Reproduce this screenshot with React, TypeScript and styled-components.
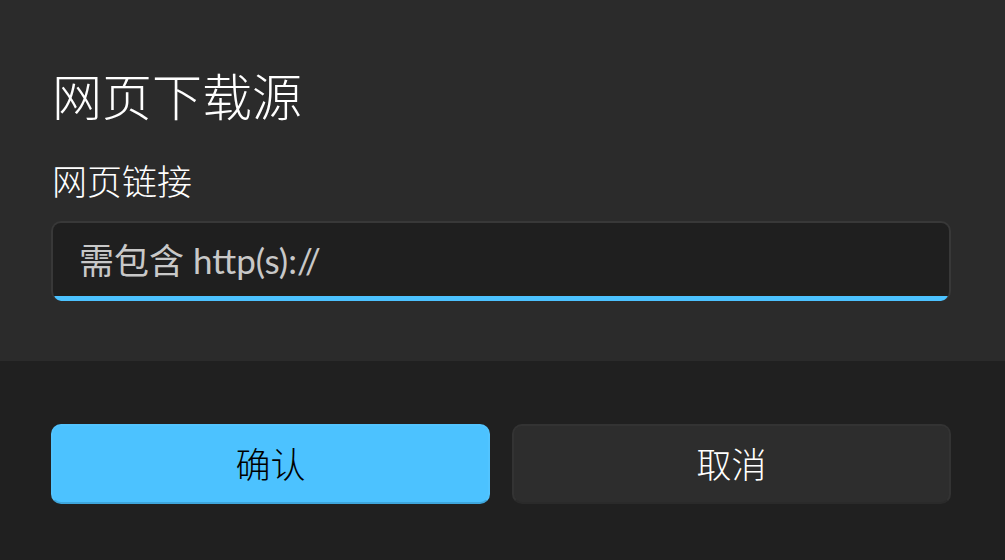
import styled, { createGlobalStyle } from "styled-components";

const GlobalStyle = createGlobalStyle`
  html, body {
    margin: 0;
    padding: 0;
    background: #202020;
  }
  body {
    font-family: "Segoe UI", "Noto Sans", "Noto Sans CJK SC", sans-serif;
    color: #ffffff;
  }
`;

const Dialog = styled.div`
  width: 1005px;
  height: 560px;
  display: flex;
  flex-direction: column;
  overflow: hidden;
`;

const Content = styled.div`
  background: #2b2b2b;
  padding: 59px 54px 60px 51px;
  display: flex;
  flex-direction: column;
  height: 361px;
  box-sizing: border-box;
`;

const Title = styled.h1`
  margin: 0 0 26px 1px;
  font-size: 50px;
  line-height: 70px;
  font-weight: 300;
  font-family: "Noto Sans CJK SC", sans-serif;
`;

const Label = styled.label`
  margin: 0 0 16px 1px;
  font-size: 35px;
  line-height: 50px;
  font-weight: 300;
  font-family: "Noto Sans CJK SC", sans-serif;
`;

const InputBox = styled.div`
  height: 80px;
  box-sizing: border-box;
  border: 2px solid #383838;
  border-bottom: none;
  border-radius: 10px;
  background: #1f1f1f;
  display: flex;
  align-items: center;
  padding: 0 26px 0 26px;
  position: relative;
  overflow: hidden;

  &::after {
    content: "";
    position: absolute;
    left: 0;
    right: 0;
    bottom: 0;
    height: 5px;
    background: #4cc2ff;
  }
`;

const Input = styled.input`
  flex: 1;
  border: none;
  outline: none;
  background: transparent;
  font-size: 35px;
  color: #ffffff;
  font-family: "Lato", "Noto Sans CJK SC", sans-serif;
  padding: 0;
  margin-top: -4px;

  &::placeholder {
    color: #c8c8c8;
  }
`;

const Footer = styled.div`
  flex: 1;
  background: #202020;
  display: grid;
  grid-template-columns: 1fr 1fr;
  gap: 22px;
  padding: 63px 54px 0 51px;
  align-items: start;
`;

const Button = styled.button<{ $primary?: boolean }>`
  height: 80px;
  border-radius: 10px;
  font-size: 35px;
  font-weight: 300;
  font-family: "Noto Sans CJK SC", sans-serif;
  cursor: pointer;
  box-sizing: border-box;
  background: ${(p) => (p.$primary ? "#4cc2ff" : "#2d2d2d")};
  color: ${(p) => (p.$primary ? "#000000" : "#ffffff")};
  border: 2px solid ${(p) => (p.$primary ? "#52c4ff" : "#333333")};
  border-bottom-color: ${(p) => (p.$primary ? "#3ea6dc" : "#2a2a2a")};
  padding: 0 0 4px;
`;

export default function App() {
  return (
    <>
      <GlobalStyle />
      <Dialog>
        <Content>
          <Title>网页下载源</Title>
          <Label>网页链接</Label>
          <InputBox>
            <Input placeholder="需包含 http(s)://" />
          </InputBox>
        </Content>
        <Footer>
          <Button $primary>确认</Button>
          <Button>取消</Button>
        </Footer>
      </Dialog>
    </>
  );
}
